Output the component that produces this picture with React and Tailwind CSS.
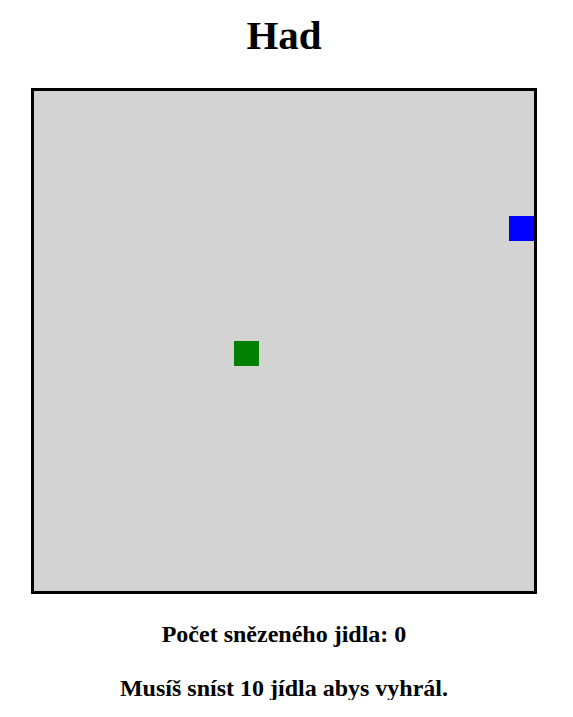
export default function App() {
  return (
    <div className="w-[568px] text-center text-black font-bold" style={{ fontFamily: '"Liberation Serif", "Times New Roman", serif' }}>
      <h1 className="pt-[15px] text-[41px] leading-[41px] font-bold">Had</h1>
      <div className="mx-auto mt-[32px] w-[506px] h-[506px] border-[3px] border-black bg-[#d3d3d3] relative">
        <div className="absolute left-[200px] top-[250px] w-[25px] h-[25px] bg-[#008000]" />
        <div className="absolute left-[475px] top-[125px] w-[25px] h-[25px] bg-[#0000ff]" />
      </div>
      <p className="mt-[28px] text-[24px] leading-[24px]">Počet snězeného jidla: 0</p>
      <p className="mt-[30px] text-[24px] leading-[24px]">Musíš sníst 10 jídla abys vyhrál.</p>
    </div>
  );
}
